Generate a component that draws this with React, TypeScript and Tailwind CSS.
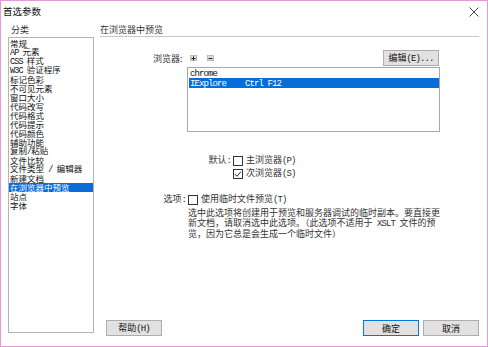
import React from 'react';

const categories = [
  '常规',
  'AP 元素',
  'CSS 样式',
  'W3C 验证程序',
  '标记色彩',
  '不可见元素',
  '窗口大小',
  '代码改写',
  '代码格式',
  '代码提示',
  '代码颜色',
  '辅助功能',
  '复制/粘贴',
  '文件比较',
  '文件类型 / 编辑器',
  '新建文档',
  '在浏览器中预览',
  '站点',
  '字体',
];

// SimSun-like half-width latin: render ASCII runs with a narrow mono font
const T = ({ text }: { text: string }) => {
  const parts = text.split(/([\x20-\x7e]+)/).filter(Boolean);
  return (
    <span className="whitespace-pre">
      {parts.map((p, i) =>
        /^[\x20-\x7e]+$/.test(p) ? (
          <span key={i} className="font-['Liberation_Mono'] tracking-[-0.9px]">
            {p}
          </span>
        ) : (
          <span key={i}>{p}</span>
        )
      )}
    </span>
  );
};

const Checkbox = ({ checked }: { checked?: boolean }) => (
  <span className="w-[10px] h-[10px] border border-[#333] bg-white flex items-center justify-center shrink-0">
    {checked && (
      <svg width="8" height="8" viewBox="0 0 8 8">
        <path d="M1 4.2 L3 6.3 L7 1.5" fill="none" stroke="#222" strokeWidth="1" />
      </svg>
    )}
  </span>
);

const Btn = ({ label, def, className = '' }: { label: string; def?: boolean; className?: string }) => (
  <div
    className={`h-[16px] flex items-center justify-center bg-[#e1e1e1] border ${
      def ? 'border-[#0078d7]' : 'border-[#adadad]'
    } text-[9px] leading-none text-[#111] ${className}`}
  >
    <T text={label} />
  </div>
);

const SmallBtn = ({ minus }: { minus?: boolean }) => (
  <span className="w-[7px] h-[6px] bg-[#dcdcdc] border border-[#bbb] flex items-center justify-center">
    <svg width="5" height="5" viewBox="0 0 5 5">
      <path d="M0.5 2.5 H4.5" stroke="#222" strokeWidth="1" />
      {!minus && <path d="M2.5 0.5 V4.5" stroke="#222" strokeWidth="1" />}
    </svg>
  </span>
);

export default function App() {
  return (
    <div className="w-[488px] h-[347px] border border-[#e59ad8] bg-white flex flex-col font-['Noto_Sans_CJK_SC',sans-serif] text-[9px] leading-[9px] text-[#111] overflow-hidden">
      {/* title bar */}
      <div className="h-[21px] flex items-center justify-between pl-[2px] pr-[8px] shrink-0">
        <span className="text-[9.5px]">首选参数</span>
        <svg width="10" height="10" viewBox="0 0 10 10">
          <path d="M0.5 0.5 L9.5 9.5 M9.5 0.5 L0.5 9.5" stroke="#333" strokeWidth="0.9" />
        </svg>
      </div>

      <div className="flex flex-1 pl-[7px] pr-[8px]">
        {/* left column */}
        <div className="w-[86px] flex flex-col pb-[13px]">
          <div className="h-[15px] pl-[3px] flex items-center text-[#333]">分类</div>
          <div className="flex-1 border border-[#b4b4b4] pt-[1px]">
            {categories.map((c) => (
              <div
                key={c}
                className={`h-[9px] pl-[1px] flex items-center whitespace-nowrap text-[8.5px] leading-none ${
                  c === '在浏览器中预览' ? 'bg-[#0a6cd6] text-white' : ''
                }`}
              >
                <T text={c} />
              </div>
            ))}
          </div>
        </div>

        {/* right column */}
        <div className="flex-1 ml-[6px] flex flex-col pb-[10px]">
          <div className="h-[15px] flex items-center border-b border-[#c8c8c8] text-[#333]">在浏览器中预览</div>

          <div className="flex items-center h-[16px] mt-[13px]">
            <span className="ml-[53px] w-[37px] text-[#333]">浏览器:</span>
            <SmallBtn />
            <span className="ml-[10px]">
              <SmallBtn minus />
            </span>
            <Btn label="编辑(E)..." className="ml-auto mr-[40px] w-[56px]" />
          </div>

          <div className="ml-[87px] w-[253px] h-[65px] mt-[1px] border border-[#a8a8a8] pt-[1px] pl-[1px] leading-none">
            <div className="h-[9px] pl-[1px] flex items-center">
              <T text="chrome" />
            </div>
            <div className="h-[10px] pl-[1px] bg-[#0a6cd6] text-white flex items-center">
              <span className="w-[55px]">
                <T text="IExplore" />
              </span>
              <T text="Ctrl F12" />
            </div>
          </div>

          <div className="flex items-center mt-[23px] h-[11px] leading-none">
            <span className="w-[133px] text-right pr-[2px] text-[#333]">
              <T text="默认:" />
            </span>
            <Checkbox />
            <span className="ml-[3px] text-[#333]">
              <T text="主浏览器(P)" />
            </span>
          </div>
          <div className="flex items-center mt-[2px] h-[11px] leading-none">
            <span className="w-[133px]" />
            <Checkbox checked />
            <span className="ml-[3px] text-[#333]">
              <T text="次浏览器(S)" />
            </span>
          </div>

          <div className="flex items-center mt-[15px] h-[11px] leading-none">
            <span className="w-[88px] text-right pr-[2px] text-[#333]">
              <T text="选项:" />
            </span>
            <Checkbox />
            <span className="ml-[3px] text-[#333]">
              <T text="使用临时文件预览(T)" />
            </span>
          </div>

          <div className="ml-[88px] mt-[3px] leading-[10px] text-[#333] whitespace-nowrap">
            <div>选中此选项将创建用于预览和服务器调试的临时副本。要直接更</div>
            <div>
              <T text="新文档，请取消选中此选项。（此选项不适用于 XSLT 文件的预" />
            </div>
            <div>览，因为它总是会生成一个临时文件）</div>
          </div>

          <div className="flex-1" />

          <div className="flex items-center">
            <Btn label="帮助(H)" className="ml-[6px] w-[56px]" />
            <Btn label="确定" def className="ml-auto w-[56px]" />
            <Btn label="取消" className="ml-[4px] w-[56px]" />
          </div>
        </div>
      </div>
    </div>
  );
}
